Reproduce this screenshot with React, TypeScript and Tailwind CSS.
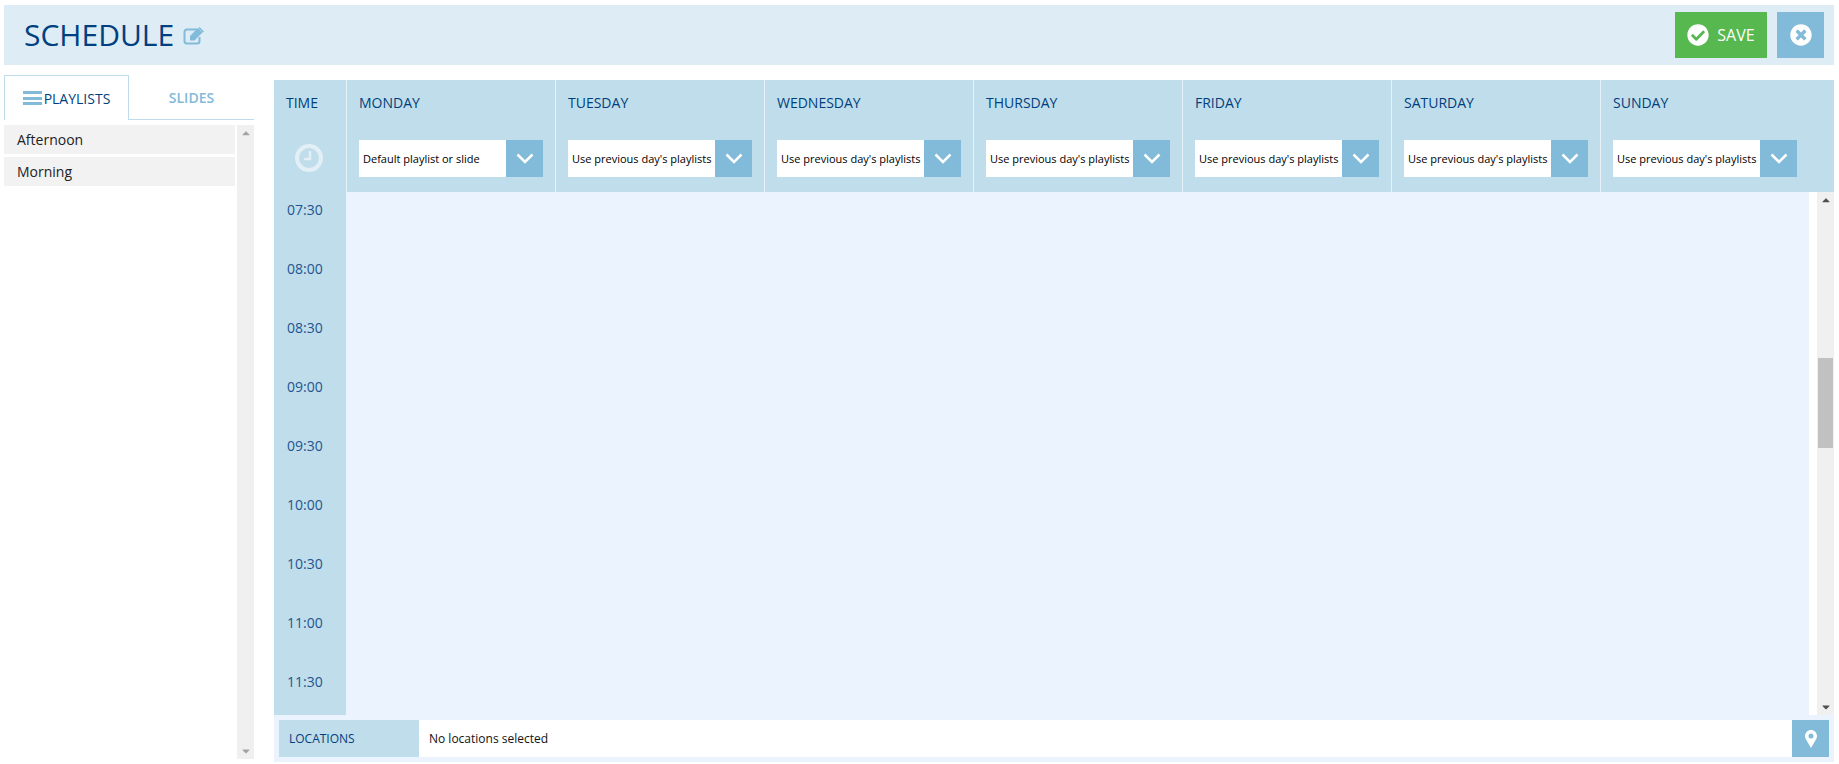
import React from 'react';
import { FaCheckCircle, FaTimesCircle, FaCaretUp, FaCaretDown } from 'react-icons/fa';

const days = [
  { name: 'MONDAY', value: 'Default playlist or slide' },
  { name: 'TUESDAY', value: "Use previous day's playlists" },
  { name: 'WEDNESDAY', value: "Use previous day's playlists" },
  { name: 'THURSDAY', value: "Use previous day's playlists" },
  { name: 'FRIDAY', value: "Use previous day's playlists" },
  { name: 'SATURDAY', value: "Use previous day's playlists" },
  { name: 'SUNDAY', value: "Use previous day's playlists" },
];

const times = ['07:30', '08:00', '08:30', '09:00', '09:30', '10:00', '10:30', '11:00', '11:30'];

const Chevron = () => (
  <svg width="18" height="11" viewBox="0 0 18 11" fill="none">
    <path d="M1.5 1.5 L9 9 L16.5 1.5" stroke="white" strokeWidth="2.5" />
  </svg>
);

const EditIcon = () => (
  <svg className="ml-[9px] mt-[1px]" width="22" height="18" viewBox="0 0 22 18" fill="none">
    <path d="M14 2.5H4a2.5 2.5 0 0 0-2.5 2.500v9A2.500 2.500 0 0 0 4 16.500h10a2.500 2.500 0 0 0 2.500-2.500V10" stroke="#82bad9" strokeWidth="2" />
    <path d="M7 9 L15 1 L19.500 5.500 L11.500 13.500 H7 Z" fill="#82bad9" />
    <path d="M16.500 0 L21 4.500 L20 5.500 L15.500 1 Z" fill="#82bad9" />
  </svg>
);

const ClockIcon = () => (
  <svg className="ml-[21px]" width="28" height="28" viewBox="0 0 28 28" fill="none">
    <circle cx="14" cy="14" r="12" stroke="#e3eff6" strokeWidth="4" />
    <path d="M15 7V15H9" stroke="#e3eff6" strokeWidth="2.5" />
  </svg>
);

const PinIcon = () => (
  <svg width="12" height="18" viewBox="0 0 12 18">
    <path
      fill="white"
      fillRule="evenodd"
      d="M6 0C2.700 0 0 2.700 0 6c0 1 .3 2 .6 2.700L6 18l5.400-9.300C11.700 8 12 7 12 6c0-3.300-2.700-6-6-6zm0 8.500a2.500 2.500 0 1 1 0-5 2.500 2.500 0 0 1 0 5z"
    />
  </svg>
);

const BarsIcon = () => (
  <div className="flex flex-col gap-[2.5px] w-[19px]">
    <div className="h-[3px] bg-[#82bad9]" />
    <div className="h-[3px] bg-[#82bad9]" />
    <div className="h-[3px] bg-[#82bad9]" />
  </div>
);

const DayHeader = ({ name, value, last }: { name: string; value: string; last?: boolean }) => (
  <div className={`h-full ${last ? 'flex-1' : 'w-[209px] border-r border-[#e6f1f8]'} pl-[12px] shrink-0`}>
    <div className="pt-[13px] h-[60px] text-[14px] leading-[20px] font-medium text-[#003f7d]">{name}</div>
    <div className="flex h-[37px] w-[184px]">
      <div className="flex-1 bg-white pl-[4px] text-[11px] leading-[37px] text-black whitespace-nowrap overflow-hidden">{value}</div>
      <div className="w-[37px] bg-[#82bad9] flex items-center justify-center"><Chevron /></div>
    </div>
  </div>
);

const App = () => {
  return (
    <div className="h-[764px] w-full bg-white flex flex-col pt-[5px] pl-[4px] pr-[5px] overflow-hidden font-['Open_Sans',sans-serif]">
      <div className="h-[60px] shrink-0 bg-[#deecf5] flex items-center pl-[20px] pr-[10px]">
        <h1 className="text-[30px] leading-[40px] text-[#004080]">SCHEDULE</h1>
        <EditIcon />
        <div className="ml-auto flex gap-[10px]">
          <button className="w-[92px] h-[46px] bg-[#56b84e] text-white flex items-center justify-center gap-[8px] text-[16px]">
            <FaCheckCircle className="text-[22px]" />
            SAVE
          </button>
          <button className="w-[47px] h-[46px] bg-[#82bad9] text-white flex items-center justify-center">
            <FaTimesCircle className="text-[22px]" />
          </button>
        </div>
      </div>

      <div className="flex-1 flex min-h-0">
        <div className="w-[250px] shrink-0 pt-[10px] flex flex-col">
          <div className="flex h-[45px] border-b border-[#bfdcea]">
            <div className="w-[125px] h-[45px] border border-b-0 border-[#bfdcea] bg-white flex items-center justify-center gap-[2px] text-[14px] font-medium text-[#003f7d]">
              <BarsIcon />
              PLAYLISTS
            </div>
            <div className="flex-1 flex items-center justify-center text-[14px] font-semibold text-[#82bad9]">SLIDES</div>
          </div>
          <div className="flex flex-1 mt-[5px] mb-[5px]">
            <div className="w-[231px] flex flex-col gap-[3px]">
              <div className="h-[29px] bg-[#f2f2f2] pl-[13px] text-[14px] leading-[29px] text-[#222]">Afternoon</div>
              <div className="h-[29px] bg-[#f2f2f2] pl-[13px] text-[14px] leading-[29px] text-[#222]">Morning</div>
            </div>
            <div className="ml-[2px] w-[17px] bg-[#f0f0f0] flex flex-col items-center justify-between py-[2px] text-[#a3a3a3] text-[12px]">
              <FaCaretUp />
              <FaCaretDown />
            </div>
          </div>
        </div>

        <div className="flex-1 ml-[20px] mt-[15px] min-w-0 flex flex-col">
          <div className="flex h-[112px] shrink-0 bg-[#c0ddeb]">
            <div className="w-[73px] shrink-0 h-full border-r border-[#e6f1f8] text-[14px] font-medium text-[#003f7d]">
              <div className="pt-[13px] pl-[12px] h-[64px] leading-[20px]">TIME</div>
              <ClockIcon />
            </div>
            {days.map((d, i) => (
              <DayHeader key={d.name} name={d.name} value={d.value} last={i === days.length - 1} />
            ))}
          </div>

          <div className="flex h-[523px] shrink-0 bg-white overflow-hidden">
            <div className="w-[72px] shrink-0 bg-[#c0ddeb] flex flex-col">
              {times.map((t) => (
                <div key={t} className="h-[59px] shrink-0 pl-[13px] text-[14px] leading-[36px] text-[#1f5590]">{t}</div>
              ))}
            </div>
            <div className="flex-1 bg-[#ebf4fe]" />
            <div className="w-[8px]" />
            <div className="relative w-[17px] bg-[#f0f0f0] flex flex-col items-center justify-between py-[2px] text-[12px] text-[#505050]">
              <FaCaretUp />
              <div className="absolute left-[1px] top-[166px] w-[15px] h-[90px] bg-[#c1c1c1]" />
              <FaCaretDown />
            </div>
          </div>

          <div className="h-[47px] shrink-0 bg-[#ebf4fe] pt-[5px] pl-[5px] pr-[5px]">
            <div className="flex h-[37px] bg-white">
              <div className="w-[140px] bg-[#c0ddeb] pl-[10px] text-[12px] leading-[37px] font-medium text-[#003f7d]">LOCATIONS</div>
              <div className="flex-1 pl-[10px] text-[12px] leading-[37px] text-[#111]">No locations selected</div>
              <div className="w-[37px] bg-[#82bad9] flex items-center justify-center">
                <PinIcon />
              </div>
            </div>
          </div>
        </div>
      </div>
    </div>
  );
};

export default App;
